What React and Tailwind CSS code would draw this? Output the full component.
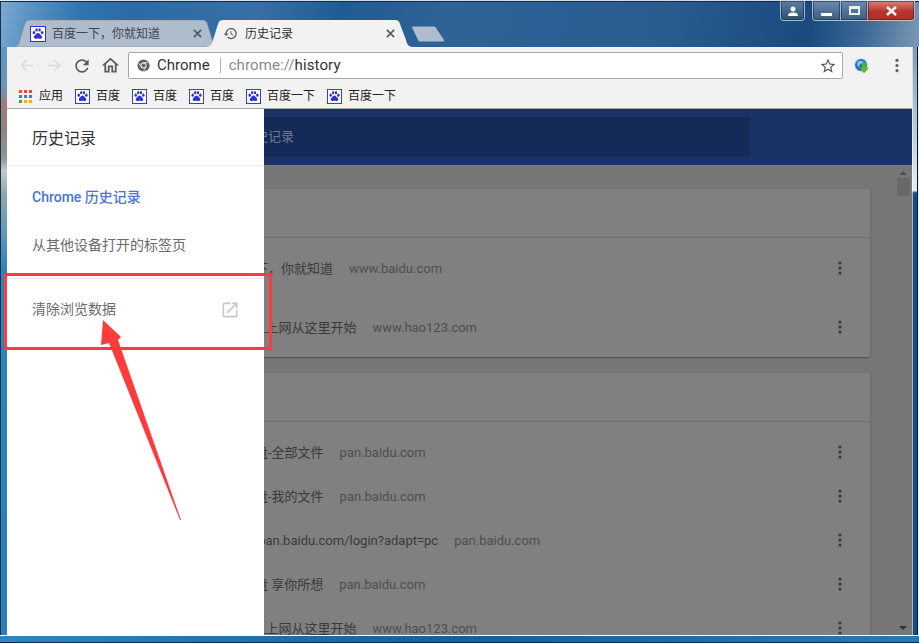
const FONT = "font-['Roboto','Noto_Sans_CJK_SC',sans-serif]";

function Paw({ className = "" }) {
  return (
    <svg viewBox="0 0 16 16" className={`shrink-0 ${className}`}>
      <rect x="0.5" y="0.5" width="15" height="15" fill="#fff" stroke="#2932e1" />
      <g fill="#2932e1">
        <ellipse cx="4" cy="6.6" rx="1.3" ry="1.7" />
        <ellipse cx="6.6" cy="3.9" rx="1.2" ry="1.7" />
        <ellipse cx="9.6" cy="3.9" rx="1.2" ry="1.7" />
        <ellipse cx="12.1" cy="6.6" rx="1.3" ry="1.7" />
        <path d="M8 6.9c-1.4 0-1.9 1.3-2.8 2.2-.9.8-1.4 1.5-1.1 2.6.3 1 1.3 1.2 2.2 1 .7-.1 1.2-.2 1.7-.2s1 .1 1.7.2c.9.2 1.9 0 2.2-1 .3-1.1-.2-1.8-1.1-2.6C9.9 8.2 9.4 6.9 8 6.9z" />
      </g>
    </svg>
  );
}

function Icon({ d, className = "", fill = "#5a5a5a" }) {
  return (
    <svg viewBox="0 0 24 24" className={`shrink-0 ${className}`} fill={fill}>
      <path d={d} />
    </svg>
  );
}

const ARROW_L = "M20 11H7.83l5.59-5.59L12 4l-8 8 8 8 1.41-1.41L7.83 13H20v-2z";
const ARROW_R = "M4 11h12.17l-5.59-5.59L12 4l8 8-8 8-1.41-1.41L16.17 13H4v-2z";
const RELOAD = "M17.65 6.35C16.2 4.9 14.21 4 12 4c-4.42 0-7.99 3.58-7.99 8s3.57 8 7.99 8c3.73 0 6.84-2.55 7.73-6h-2.08c-.82 2.33-3.04 4-5.65 4-3.31 0-6-2.69-6-6s2.69-6 6-6c1.66 0 3.14.69 4.22 1.78L13 11h7V4l-2.35 2.35z";
const HOME = "M12 5.69l5 4.5V18h-2v-6H9v6H7v-7.81l5-4.5M12 3L2 12h3v8h6v-6h2v6h6v-8h3L12 3z";
const STAR = "M22 9.24l-7.19-.62L12 2 9.19 8.63 2 9.24l5.46 4.73L5.82 21 12 17.27 18.18 21l-1.63-7.03L22 9.24zM12 15.4l-3.76 2.27 1-4.28-3.32-2.88 4.38-.38L12 6.1l1.71 4.04 4.38.38-3.32 2.88 1 4.28L12 15.4z";
const HISTORY = "M13 3c-4.97 0-9 4.03-9 9H1l3.89 3.89.07.14L9 12H6c0-3.87 3.13-7 7-7s7 3.13 7 7-3.13 7-7 7c-1.93 0-3.68-.79-4.94-2.06l-1.42 1.42C8.27 19.99 10.51 21 13 21c4.97 0 9-4.03 9-9s-4.03-9-9-9zm-1 5v5l4.28 2.54.72-1.21-3.5-2.08V8H12z";
const OPEN = "M19 19H5V5h7V3H5c-1.11 0-2 .9-2 2v14c0 1.1.89 2 2 2h14c1.1 0 2-.9 2-2v-7h-2v7zM14 3v2h3.59l-9.83 9.83 1.41 1.41L19 6.41V10h2V3h-7z";

function InactiveTab({ children, label }) {
  return (
    <div className="relative h-[27px] w-[198px] flex items-center shrink-0">
      <svg viewBox="0 0 198 27" className="absolute inset-0 w-[198px] h-[27px]">
        <path d="M0 27C3 26 4 24 5 20L10 3C11 1 12 0 15 0H187C190 0 191 1 192 3L198 22V27Z" fill="#aebccb" stroke="#7d8b9b" strokeWidth="0.6" />
      </svg>
      <div className="relative flex items-center w-full pl-[15px] pr-[11px]">
        {children}
        <span className="ml-[6px] text-[12px] leading-none text-[#3c4652]">{label}</span>
        <svg viewBox="0 0 10 10" className="ml-auto w-[9px] h-[9px]" stroke="#525c68" strokeWidth="1.8">
          <path d="M1 1l8 8M9 1l-8 8" />
        </svg>
      </div>
    </div>
  );
}

function ActiveTab({ children, label }) {
  return (
    <div className="relative z-10 -ml-[6px] h-[27px] w-[205px] flex items-center shrink-0">
      <svg viewBox="0 0 205 27" className="absolute inset-0 w-[205px] h-[27px]">
        <path d="M0 27C4 26 5 24 6 20L11 4C12 1 13 0 16 0H188C191 0 192 1 193 4L199 20C200 24 201 26 205 27Z" fill="#f2f2f2" />
      </svg>
      <div className="relative flex items-center w-full pl-[16px] pr-[17px]">
        {children}
        <span className="ml-[7px] text-[12px] leading-none text-[#333]">{label}</span>
        <svg viewBox="0 0 10 10" className="ml-auto w-[9px] h-[9px]" stroke="#5a5a5a" strokeWidth="1.8">
          <path d="M1 1l8 8M9 1l-8 8" />
        </svg>
      </div>
    </div>
  );
}

function Bookmark({ label }) {
  return (
    <div className="flex items-center gap-[6px]">
      <Paw className="w-[15px] h-[15px]" />
      <span className="text-[12px] leading-none text-[#222]">{label}</span>
    </div>
  );
}

function Dots() {
  return (
    <svg viewBox="0 0 4 14" className="w-[4px] h-[14px] shrink-0 ml-auto mr-[28px]" fill="#383838">
      <circle cx="2" cy="2" r="1.6" />
      <circle cx="2" cy="7" r="1.6" />
      <circle cx="2" cy="12" r="1.6" />
    </svg>
  );
}

function Row({ title, domain, className = "" }) {
  return (
    <div className={`h-[44px] flex items-center pl-[183px] text-[13px] ${className}`}>
      <span className="mt-[2px] text-[#3a3a3a]">{title}</span>
      <span className="mt-[2px] ml-[16px] text-[#4f4f4f]">{domain}</span>
      <Dots />
    </div>
  );
}

function Card({ children }) {
  return (
    <section className="bg-[#808080] rounded-[2px] shadow-[0_1px_2px_rgba(0,0,0,0.35)] mb-[16px]">
      <div className="h-[49px] border-b border-[#6e6e6e]" />
      <div className="py-[8px]">{children}</div>
    </section>
  );
}

function WinButton({ className = "", children }) {
  return (
    <div className={`h-[20px] flex items-center justify-center border border-t-0 border-[#c9d3de]/70 shadow-[inset_0_0_0_1px_rgba(20,40,70,0.55)] ${className}`}>
      {children}
    </div>
  );
}

export default function App() {
  return (
    <div className={`relative w-[919px] h-[643px] overflow-hidden flex flex-col ${FONT} bg-[#1c5a92]`}>
      {/* title bar */}
      <header className="h-[47px] shrink-0 flex flex-col bg-[linear-gradient(100deg,#7ea9cf_0%,#5c96c6_3%,#2f74ae_9%,#2b6ca6_14%,#376fa6_28%,#1f5c96_37%,#2f6296_48%,#2c5f95_60%,#2a5c90_72%,#1a4a80_88%,#3e6a96_94%,#7d99b5_100%)] border-t border-t-white/80 shadow-[inset_1px_0_0_#12324f,inset_0_1px_0_#0d2a4a]">
        <div className="h-[19px] flex justify-end pr-[4px]">
          <WinButton className="w-[25px] rounded-b-[4px] mr-[7px] bg-[linear-gradient(#5b7ea3,#2c4f76)]">
            <svg viewBox="0 0 12 10" className="w-[12px] h-[10px]" fill="#fff">
              <circle cx="6" cy="3" r="2.5" />
              <path d="M1 10c0-3 2-3.6 5-3.6S11 7 11 10z" />
            </svg>
          </WinButton>
          <WinButton className="w-[28px] rounded-bl-[4px] border-r-0 bg-[linear-gradient(#6a8bac,#3a5d83)]">
            <span className="block w-[11px] h-[3px] bg-white mt-[8px]" />
          </WinButton>
          <WinButton className="w-[27px] border-r-0 bg-[linear-gradient(#6a8bac,#3a5d83)]">
            <span className="block w-[11px] h-[9px] border-2 border-t-[3px] border-[#e8eef4]" />
          </WinButton>
          <WinButton className="w-[48px] rounded-br-[4px] bg-[linear-gradient(#d98378,#b8352b_55%,#a8322a)]">
            <svg viewBox="0 0 12 10" className="w-[13px] h-[10px]" stroke="#f4f4f4" strokeWidth="2.6">
              <path d="M1.5 1l9 8M10.5 1l-9 8" />
            </svg>
          </WinButton>
        </div>
        <nav className="h-[27px] flex items-end pl-[15px]">
          <InactiveTab label="百度一下，你就知道">
            <Paw className="w-[16px] h-[16px]" />
          </InactiveTab>
          <ActiveTab label="历史记录">
            <Icon d={HISTORY} fill="#5f5f5f" className="w-[15px] h-[15px]" />
          </ActiveTab>
          <svg viewBox="0 0 34 16" className="w-[34px] h-[16px] ml-[-1px] mb-[5px] shrink-0">
            <path d="M1 1.5C1 .8 1.5.5 2 .5H23C24 .5 24.5 1 25 2L33 14C33.4 15 33 15.5 32 15.5H9C8 15.5 7.5 15 7 14Z" fill="#aebccb" />
          </svg>
        </nav>
      </header>

      {/* middle: frame strips + chrome content */}
      <div className="flex-1 flex min-h-0">
        <div className="w-[7px] shrink-0 border-l border-l-[#12324f] bg-[linear-gradient(#5d96c4_0%,#6f93b4_7%,#a07f76_9.5%,#93807a_14%,#8c9a92_19%,#c4cac6_21%,#8fa8a8_25%,#6a9fb8_30%,#2f83b8_38%,#2b7fb6_100%)]" />
        <div className="flex-1 flex flex-col min-w-0 relative">
          {/* toolbar */}
          <div className="h-[37px] shrink-0 bg-[#f2f2f2] flex items-center pl-[10px] pr-[11px]">
            <Icon d={ARROW_L} fill="#dcdcdc" className="w-[19px] h-[19px]" />
            <Icon d={ARROW_R} fill="#dcdcdc" className="ml-[9px] w-[19px] h-[19px]" />
            <Icon d={RELOAD} fill="#5c5c5c" className="ml-[8px] w-[20px] h-[20px]" />
            <Icon d={HOME} fill="#5c5c5c" className="ml-[8px] w-[21px] h-[21px]" />
            <div className="ml-[7px] h-[27px] w-[715px] shrink-0 bg-white border border-[#a9a9a9] rounded-[2px] flex items-center pl-[8px] pr-[5px]">
              <svg viewBox="0 0 16 16" className="w-[13px] h-[13px] shrink-0">
                <circle cx="8" cy="8" r="7.5" fill="#5f6368" />
                <circle cx="8" cy="8" r="3.6" fill="#fff" />
                <circle cx="8" cy="8" r="2.6" fill="#5f6368" />
                <path d="M8 4.4h6.6" stroke="#fff" strokeWidth="0.8" />
                <path d="M4.9 9.8L1.6 4.2M11.1 9.8L7.8 15.4" stroke="#fff" strokeWidth="0.8" />
              </svg>
              <span className="ml-[7px] text-[15px] text-[#333] leading-none">Chrome</span>
              <span className="ml-[10px] w-px h-[15px] bg-[#b5b5b5]" />
              <span className="ml-[8px] text-[15px] tracking-[0.1px] leading-none text-[#8a8a8a]">chrome://<span className="text-[#333]">history</span></span>
              <Icon d={STAR} fill="#5a5a5a" className="ml-auto w-[18px] h-[18px]" />
            </div>
            <svg viewBox="0 0 18 18" className="ml-[10px] w-[17px] h-[17px] shrink-0">
              <circle cx="8.5" cy="8.5" r="8" fill="#dfe3e6" />
              <circle cx="8.5" cy="8.5" r="6.3" fill="#1f6fbe" />
              <path d="M4.5 5.5c2-2 5-2 7 0l-2 1.5-2 .5-1 3-2-1z" fill="#7fc1ea" />
              <path d="M9.5 6h4v5H17l-5.3 6.3L6.5 11h3z" fill="#59b72a" />
            </svg>
            <svg viewBox="0 0 4 16" className="ml-auto mr-[2px] w-[4px] h-[15px] shrink-0" fill="#5f5f5f">
              <circle cx="2" cy="2.5" r="1.7" />
              <circle cx="2" cy="8" r="1.7" />
              <circle cx="2" cy="13.5" r="1.7" />
            </svg>
          </div>
          {/* bookmarks */}
          <div className="h-[24px] shrink-0 bg-[#f2f2f2] flex items-center pl-[12px] gap-[12px]">
            <div className="flex items-center gap-[7px]">
              <div className="grid grid-cols-3 gap-[2px] w-[13px] shrink-0">
                {["#e5493c", "#e5493c", "#e5493c", "#3b78e7", "#3b78e7", "#3b78e7", "#3aa757", "#f4b400", "#f4b400"].map((c, i) => (
                  <span key={i} className="h-[3px] w-[3px]" style={{ background: c }} />
                ))}
              </div>
              <span className="text-[12px] leading-none text-[#222]">应用</span>
            </div>
            <Bookmark label="百度" />
            <Bookmark label="百度" />
            <Bookmark label="百度" />
            <Bookmark label="百度一下" />
            <Bookmark label="百度一下" />
          </div>
          <div className="h-px shrink-0 bg-[#a8a8a8]" />

          {/* page */}
          <div className="relative flex-1 min-h-0 flex flex-col overflow-hidden">
            <div className="h-[56px] shrink-0 bg-[#1a3265] flex items-center pl-[163px]">
              <div className="w-[580px] h-[40px] rounded-[2px] bg-[#142a57] flex items-center pl-[46px] text-[13px] text-[#6f7a92]">搜索历史记录</div>
            </div>
            <div className="flex-1 min-h-0 flex bg-[#777777]">
              <main className="w-[889px] shrink-0 px-[26px] pt-[24px] overflow-hidden">
                <Card>
                  <Row title="百度一下，你就知道" domain="www.baidu.com" />
                  <Row title="hao123_上网从这里开始" domain="www.hao123.com" className="mt-[15px]" />
                </Card>
                <Card>
                  <Row title="百度网盘-全部文件" domain="pan.baidu.com" />
                  <Row title="百度网盘-我的文件" domain="pan.baidu.com" />
                  <Row title="https://pan.baidu.com/login?adapt=pc" domain="pan.baidu.com" />
                  <Row title="百度网盘 享你所想" domain="pan.baidu.com" />
                  <Row title="hao123_上网从这里开始" domain="www.hao123.com" />
                </Card>
              </main>
              <div className="flex-1 flex flex-col items-center pr-[2px] pt-[6px] pb-[5px]">
                <span className="w-0 h-0 border-x-[4px] border-x-transparent border-b-[4px] border-b-[#4f4f4f]" />
                <span className="mt-[3px] w-[13px] h-[18px] bg-[#686868]" />
                <span className="mt-auto w-0 h-0 border-x-[4px] border-x-transparent border-t-[4px] border-t-[#333]" />
              </div>
            </div>

            {/* drawer */}
            <aside className="absolute left-0 top-0 bottom-0 w-[257px] bg-white z-10 flex flex-col">
              <div className="h-[57px] shrink-0 border-b border-[#ececec] flex items-center pt-[3px] pl-[25px] text-[16px] text-[#333]">历史记录</div>
              <div className="mt-[7px] h-[48px] flex items-center pl-[25px] text-[14px] font-medium text-[#4a74d4]">Chrome 历史记录</div>
              <div className="h-[48px] flex items-center pl-[25px] text-[14px] text-[#6b6b6b]">从其他设备打开的标签页</div>
              <div className="mt-[9px] border-t border-[#e6e6e6] h-[62px] flex items-center pl-[25px] pr-[24px] text-[14px] text-[#6b6b6b]">
                <span>清除浏览数据</span>
                <Icon d={OPEN} fill="#c8c8c8" className="ml-auto w-[20px] h-[20px]" />
              </div>
            </aside>
          </div>
        </div>
        <div className="w-[7px] shrink-0 bg-[linear-gradient(#7d99b5_0%,#b4c5d6_12%,#e4ebf2_24.4%,#1a4a80_24.8%,#1a4a80_100%)] border-l border-l-white/60 shadow-[inset_-1px_0_0_#e8eef4,inset_-2px_0_0_#0b1a2b]" />
      </div>
      <footer className="h-[8px] shrink-0 bg-[linear-gradient(90deg,#2f86bd,#1a5d98_50%,#2b78b0)] border-t border-t-white shadow-[inset_0_-1px_0_#0d2a4a]" />

      {/* annotation overlays */}
      <div className="absolute left-[4px] top-[273px] w-[268px] h-[77px] border-[3px] border-[#ff3b3b] z-20" />
      <svg className="absolute left-0 top-0 w-[919px] h-[643px] z-20 pointer-events-none" viewBox="0 0 919 643">
        <polygon points="103,320 121,337 118,340 181,520 180,520 109,343 101,345" fill="#ff3b3b" />
      </svg>
    </div>
  );
}
